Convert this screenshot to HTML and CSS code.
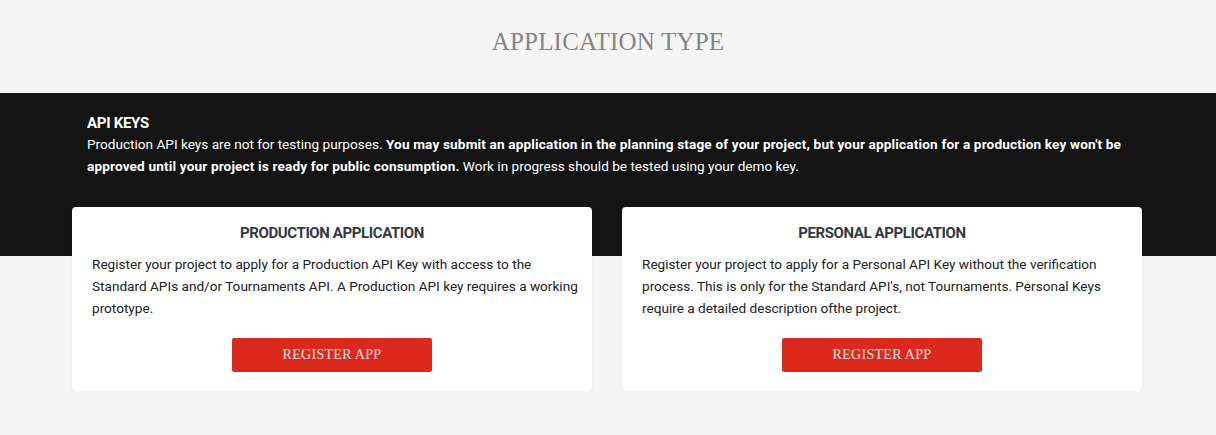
FILE: index.html
```html
<!DOCTYPE html>
<html>
<head>
<meta charset="utf-8">
<link rel="stylesheet" href="styles.css">
</head>
<body>
<header class="page-head">
  <h1 class="page-title">Application Type</h1>
</header>
<section class="band">
  <div class="container">
    <h2 class="band-title">API KEYS</h2>
    <p class="band-text">Production API keys are not for testing purposes. <strong>You may submit an application in the planning stage of your project, but your application for a production key won't be approved until your project is ready for public consumption.</strong> Work in progress should be tested using your demo key.</p>
  </div>
</section>
<section class="cards">
  <div class="card">
    <h3 class="card-title">PRODUCTION APPLICATION</h3>
    <p class="card-text">Register your project to apply for a Production API Key with access to the Standard APIs and/or Tournaments API. A Production API key requires a working prototype.</p>
    <div class="card-actions"><a class="btn" href="#">Register App</a></div>
  </div>
  <div class="card">
    <h3 class="card-title">PERSONAL APPLICATION</h3>
    <p class="card-text">Register your project to apply for a Personal API Key without the verification process. This is only for the Standard API's, not Tournaments. Personal Keys require a detailed description ofthe project.</p>
    <div class="card-actions"><a class="btn" href="#">Register App</a></div>
  </div>
</section>
</body>
</html>
```
FILE: styles.css
```css
* { box-sizing: border-box; }
html, body { margin: 0; padding: 0; }
body {
  background: #f5f5f5;
  font-family: "Roboto", "Liberation Sans", sans-serif;
  font-size: 13.6px;
  color: #222;
}
.page-head {
  height: 93px;
  display: flex;
  align-items: flex-start;
  justify-content: center;
  padding-top: 27px;
}
.page-title {
  margin: 0;
  font-family: "Liberation Serif", serif;
  font-weight: normal;
  text-transform: uppercase;
  font-size: 25px;
  letter-spacing: 0.2px;
  color: #858585;
  line-height: 30px;
}
.band {
  background: #141414;
  color: #fff;
  height: 163px;
}
.container {
  width: 1070px;
  margin-left: calc(50% - 536px);
  padding: 21px 15px 0;
}
.band-title {
  margin: 0;
  font-size: 15px;
  font-weight: bold;
  letter-spacing: -0.3px;
  line-height: 18px;
}
.band-text {
  margin: 1px 0 0;
  line-height: 22px;
  font-size: 13.6px;
}
.band-text strong {
  letter-spacing: 0.15px;
}
.cards {
  width: 1070px;
  margin: -49px 0 0 calc(50% - 536px);
  display: flex;
  gap: 30px;
}
.card {
  flex: 1;
  background: #fff;
  border-radius: 4px;
  box-shadow: 0 1px 2px rgba(0,0,0,0.08);
  padding: 17px 20px 19px;
}
.card-title {
  margin: 0;
  text-align: center;
  font-size: 15px;
  font-weight: bold;
  letter-spacing: -0.4px;
  color: #333a40;
  line-height: 18px;
}
.card-text {
  margin: 11px -8px 0 0;
  line-height: 22px;
  font-size: 13.6px;
  color: #222;
}
.card-actions {
  display: flex;
  justify-content: center;
  margin-top: 19px;
}
.btn {
  display: block;
  width: 200px;
  height: 34px;
  line-height: 34px;
  text-align: center;
  background: #dc291e;
  color: #f3e4e0;
  border-radius: 2px;
  text-decoration: none;
  font-family: "Liberation Serif", serif;
  text-transform: uppercase;
  font-size: 14px;
  letter-spacing: 0.3px;
}
```
